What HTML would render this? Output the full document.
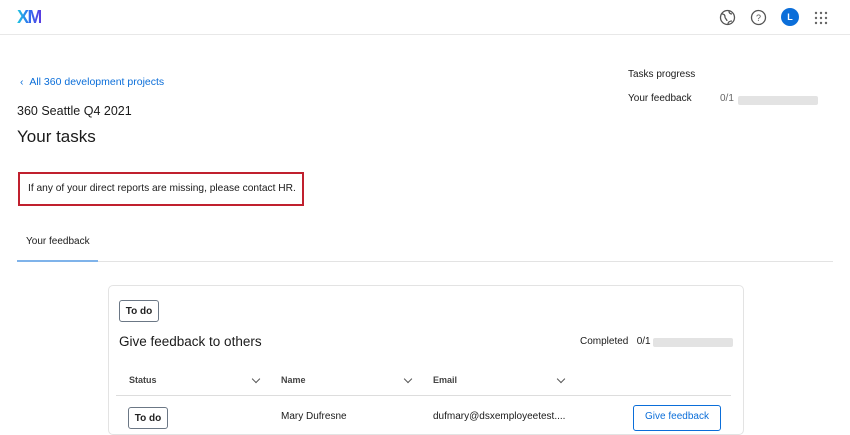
<!DOCTYPE html>
<html><head><style>
*{box-sizing:border-box;margin:0;padding:0}
body{width:850px;height:425px;overflow:hidden;background:#fff;font-family:"Liberation Sans",sans-serif;color:#1a1a1a;position:relative}
.a{position:absolute;white-space:nowrap}
.bar{position:absolute;height:9px;background:#e3e3e3;border-radius:2px}
.tag{position:absolute;border:1px solid #6b7785;border-radius:3px;font-size:10px;display:flex;align-items:center;justify-content:center;color:#222;font-weight:bold}
.chev{position:absolute;width:6px;height:6px;border-right:1.2px solid #555;border-bottom:1.2px solid #555;transform:rotate(45deg)}
</style></head><body>
<div class="a" style="left:17px;top:7px;font-size:18px;letter-spacing:-1.5px;background:linear-gradient(90deg,#1ec8e0,#2f6ff0,#5a3ce0);-webkit-background-clip:text;color:transparent;font-weight:bold">XM</div>
<svg class="a" style="left:719px;top:9px" width="17" height="17" viewBox="0 0 17 17" fill="none" stroke="#555" stroke-width="1.3"><circle cx="8.5" cy="8.5" r="7"/><path d="M3 5c2 0 3 1 3 3s2 2 2 4M10 2c0 2 1 3 3 3M9 15c0-2 2-3 4-3"/></svg>
<svg class="a" style="left:750px;top:9px" width="17" height="17" viewBox="0 0 17 17"><circle cx="8.5" cy="8.5" r="7" fill="none" stroke="#555" stroke-width="1.3"/><text x="8.5" y="12" font-size="9" text-anchor="middle" fill="#555" font-family="Liberation Sans">?</text></svg>
<div class="a" style="left:781px;top:8px;width:18px;height:18px;border-radius:50%;background:#0b6ed9;color:#fff;font-size:9px;font-weight:bold;display:flex;align-items:center;justify-content:center">L</div>
<svg class="a" style="left:814px;top:11px" width="14" height="14"><g fill="#666"><circle cx="2" cy="2" r="1.2"/><circle cx="7" cy="2" r="1.2"/><circle cx="12" cy="2" r="1.2"/><circle cx="2" cy="7" r="1.2"/><circle cx="7" cy="7" r="1.2"/><circle cx="12" cy="7" r="1.2"/><circle cx="2" cy="12" r="1.2"/><circle cx="7" cy="12" r="1.2"/><circle cx="12" cy="12" r="1.2"/></g></svg>
<div class="a" style="left:0;top:34px;width:850px;height:1px;background:#e8e8e8"></div>
<div class="a" style="left:20px;top:76px;font-size:10.5px;color:#0b6ed9">‹&nbsp;&nbsp;All 360 development projects</div>
<div class="a" style="left:17px;top:104px;font-size:12.5px">360 Seattle Q4 2021</div>
<div class="a" style="left:17px;top:127px;font-size:17px">Your tasks</div>
<div class="a" style="left:628px;top:69px;font-size:10px">Tasks progress</div>
<div class="a" style="left:628px;top:93px;font-size:10px">Your feedback</div>
<div class="a" style="left:720px;top:93px;font-size:10px;color:#666">0/1</div>
<div class="bar" style="left:738px;top:96px;width:80px"></div>
<div class="a" style="left:18px;top:172px;width:286px;height:34px;border:2px solid #c0202e"></div>
<div class="a" style="left:28px;top:183px;font-size:10.2px">If any of your direct reports are missing, please contact HR.</div>
<div class="a" style="left:26px;top:236px;font-size:10px">Your feedback</div>
<div class="a" style="left:17px;top:261px;width:816px;height:1px;background:#e3e3e3"></div>
<div class="a" style="left:17px;top:260px;width:81px;height:2px;background:#7fb3ea"></div>
<div class="a" style="left:108px;top:285px;width:636px;height:150px;border:1px solid #e3e3e3;border-radius:5px"></div>
<div class="tag" style="left:119px;top:300px;width:40px;height:22px">To do</div>
<div class="a" style="left:119px;top:334px;font-size:13.5px">Give feedback to others</div>
<div class="a" style="left:580px;top:336px;font-size:10px">Completed&nbsp;&nbsp; 0/1</div>
<div class="bar" style="left:653px;top:338px;width:80px"></div>
<div class="a" style="left:129px;top:375px;font-size:9px;font-weight:bold;color:#444">Status</div>
<div class="a" style="left:281px;top:375px;font-size:9px;font-weight:bold;color:#444">Name</div>
<div class="a" style="left:433px;top:375px;font-size:9px;font-weight:bold;color:#444">Email</div>
<div class="chev" style="left:253px;top:376px"></div>
<div class="chev" style="left:405px;top:376px"></div>
<div class="chev" style="left:558px;top:376px"></div>
<div class="a" style="left:116px;top:395px;width:491px;height:1px;background:#ddd"></div>
<div class="a" style="left:607px;top:395px;width:124px;height:1px;background:#ddd"></div>
<div class="tag" style="left:128px;top:407px;width:40px;height:22px">To do</div>
<div class="a" style="left:281px;top:411px;font-size:10px">Mary Dufresne</div>
<div class="a" style="left:433px;top:411px;font-size:10px">dufmary@dsxemployeetest....</div>
<div class="a" style="left:633px;top:405px;width:88px;height:26px;border:1px solid #0b6ed9;border-radius:3px;color:#0b6ed9;font-size:10px;text-align:center;line-height:22px">Give feedback</div>
</body></html>
